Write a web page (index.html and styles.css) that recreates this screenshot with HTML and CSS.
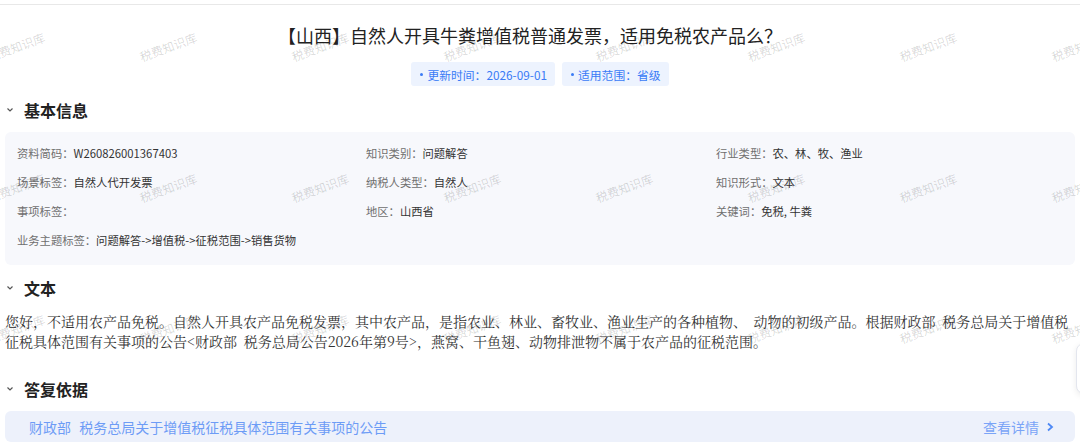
FILE: index.html
```html
<!DOCTYPE html>
<html lang="zh-CN">
<head>
    <meta charset="UTF-8">
    <title>【山西】自然人开具牛粪增值税普通发票，适用免税农产品么？</title>
    <meta name="viewport" content="width=device-width, initial-scale=1.0">
    <link rel="stylesheet" href="styles.css">
</head>
<body>
    <div class="page">
        <h1 class="title">【山西】自然人开具牛粪增值税普通发票，适用免税农产品么？</h1>
        <div class="tags">
            <span class="tag">更新时间：2026-09-01</span>
            <span class="tag">适用范围：省级</span>
        </div>

        <h2 class="section-title">
            <svg class="fold" width="8" height="8" viewBox="0 0 8 8"><polyline points="1.5,2.5 4,5 6.5,2.5" /></svg>
            基本信息
        </h2>
        <div class="info">
            <div class="info-item"><span class="label">资料简码：</span><span class="value">W260826001367403</span></div>
            <div class="info-item"><span class="label">知识类别：</span><span class="value">问题解答</span></div>
            <div class="info-item"><span class="label">行业类型：</span><span class="value">农、林、牧、渔业</span></div>
            <div class="info-item"><span class="label">场景标签：</span><span class="value">自然人代开发票</span></div>
            <div class="info-item"><span class="label">纳税人类型：</span><span class="value">自然人</span></div>
            <div class="info-item"><span class="label">知识形式：</span><span class="value">文本</span></div>
            <div class="info-item"><span class="label">事项标签：</span><span class="value"></span></div>
            <div class="info-item"><span class="label">地区：</span><span class="value">山西省</span></div>
            <div class="info-item"><span class="label">关键词：</span><span class="value">免税, 牛粪</span></div>
            <div class="info-item"><span class="label">业务主题标签：</span><span class="value">问题解答-&gt;增值税-&gt;征税范围-&gt;销售货物</span></div>
        </div>

        <h2 class="section-title">
            <svg class="fold" width="8" height="8" viewBox="0 0 8 8"><polyline points="1.5,2.5 4,5 6.5,2.5" /></svg>
            文本
        </h2>
        <p class="content">您好，不适用农产品免税。自然人开具农产品免税发票，其中农产品，是指农业、林业、畜牧业、渔业生产的各种植物、 动物的初级产品。根据财政部 税务总局关于增值税征税具体范围有关事项的公告&lt;财政部 税务总局公告2026年第9号&gt;，燕窝、干鱼翅、动物排泄物不属于农产品的征税范围。</p>

        <h2 class="section-title basis-title">
            <svg class="fold" width="8" height="8" viewBox="0 0 8 8"><polyline points="1.5,2.5 4,5 6.5,2.5" /></svg>
            答复依据
        </h2>
        <div class="basis">
            <span class="basis-name">财政部 税务总局关于增值税征税具体范围有关事项的公告</span>
            <span class="basis-more">查看详情
                <svg width="10" height="12" viewBox="0 0 10 12"><polyline points="3,2.5 7,6 3,9.5" /></svg>
            </span>
        </div>
    </div>

    <!-- floating tool card at the right edge -->
    <div class="side-card"></div>

    <!-- watermark layer -->
    <div class="watermark">
        <div class="watermark-grid">
            <span>税费知识库</span><span>税费知识库</span><span>税费知识库</span><span>税费知识库</span><span>税费知识库</span><span>税费知识库</span><span>税费知识库</span><span>税费知识库</span>
            <span>税费知识库</span><span>税费知识库</span><span>税费知识库</span><span>税费知识库</span><span>税费知识库</span><span>税费知识库</span><span>税费知识库</span><span>税费知识库</span>
            <span>税费知识库</span><span>税费知识库</span><span>税费知识库</span><span>税费知识库</span><span>税费知识库</span><span>税费知识库</span><span>税费知识库</span><span>税费知识库</span>
        </div>
    </div>
</body>
</html>
```

FILE: styles.css
```css
body {
    margin: 0;
    font-family: "Noto Sans CJK SC", "Noto Sans", sans-serif;
    color: #333;
    background: #fff;
    width: 1080px;
    height: 446px;
    overflow: hidden;
    position: relative;
}
.page {
    margin-top: 4px;
    border-top: 1px solid #e8e8e8;
    padding: 0 5px;
}
.title {
    margin: 17px 0 0;
    padding-right: 20px;
    font-size: 18px;
    line-height: 26px;
    font-weight: normal;
    color: #222;
    text-align: center;
}
.tags {
    display: flex;
    justify-content: center;
    gap: 7px;
    margin-top: 14px;
}
.tag {
    display: inline-flex;
    align-items: center;
    height: 24px;
    padding: 0 8px 0 9px;
    font-size: 11.8px;
    color: #3a7bf6;
    background: #edf3fe;
    border-radius: 3px;
}
.tag::before {
    content: "";
    width: 3px;
    height: 3px;
    border-radius: 50%;
    background: #3a7bf6;
    margin-right: 4px;
}
.section-title {
    display: flex;
    align-items: center;
    margin: 12px 0 0;
    height: 24px;
    font-size: 16px;
    font-weight: bold;
    color: #222;
}
.fold {
    margin: 0 10px 0 1px;
    fill: none;
    stroke: #555;
    stroke-width: 1.2;
}
.info {
    margin-top: 10px;
    background: #f7f8fc;
    border-radius: 6px;
    padding: 7px 12px 10px;
    display: grid;
    grid-template-columns: 349px 350px 1fr;
    font-size: 11.3px;
    line-height: 29px;
}
.info-item {
    white-space: nowrap;
}
.label {
    color: #6f6f6f;
}
.value {
    color: #333;
}
.section-title + .content,
.info + .section-title {
    margin-top: 11px;
}
.content {
    margin: 10px 0 0;
    font-family: "Noto Serif CJK SC", "Noto Sans CJK SC", serif;
    font-size: 14px;
    line-height: 20px;
    word-spacing: 3px;
    color: #333;
}
.basis-title {
    margin-top: 26px;
}
.basis {
    margin-top: 10px;
    height: 31px;
    display: flex;
    align-items: center;
    justify-content: space-between;
    padding: 0 20px 0 24px;
    background: #edf1fb;
    border-radius: 6px;
    font-size: 14px;
}
.basis-name {
    color: #6d9cf6;
    word-spacing: 5px;
}
.basis-more {
    display: flex;
    align-items: center;
    gap: 6px;
    color: #7aa4f7;
}
.basis-more svg {
    fill: none;
    stroke: #4d88f5;
    stroke-width: 1.8;
}
.side-card {
    position: absolute;
    left: 1076px;
    top: 343px;
    width: 40px;
    height: 49px;
    background: #fff;
    border: 1px solid #e3e6ee;
    border-radius: 8px;
    box-shadow: 0 2px 6px rgba(0, 0, 0, 0.08);
}
.watermark {
    position: absolute;
    inset: 0;
    overflow: hidden;
    pointer-events: none;
}
.watermark-grid {
    margin: -24px 0 0 -60px;
    display: grid;
    grid-template-columns: repeat(8, 152px);
    grid-auto-rows: 141px;
}
.watermark span {
    display: flex;
    align-items: center;
    justify-content: center;
    font-size: 12px;
    color: rgba(0, 0, 0, 0.16);
    transform: rotate(-20deg);
    white-space: nowrap;
}
```
